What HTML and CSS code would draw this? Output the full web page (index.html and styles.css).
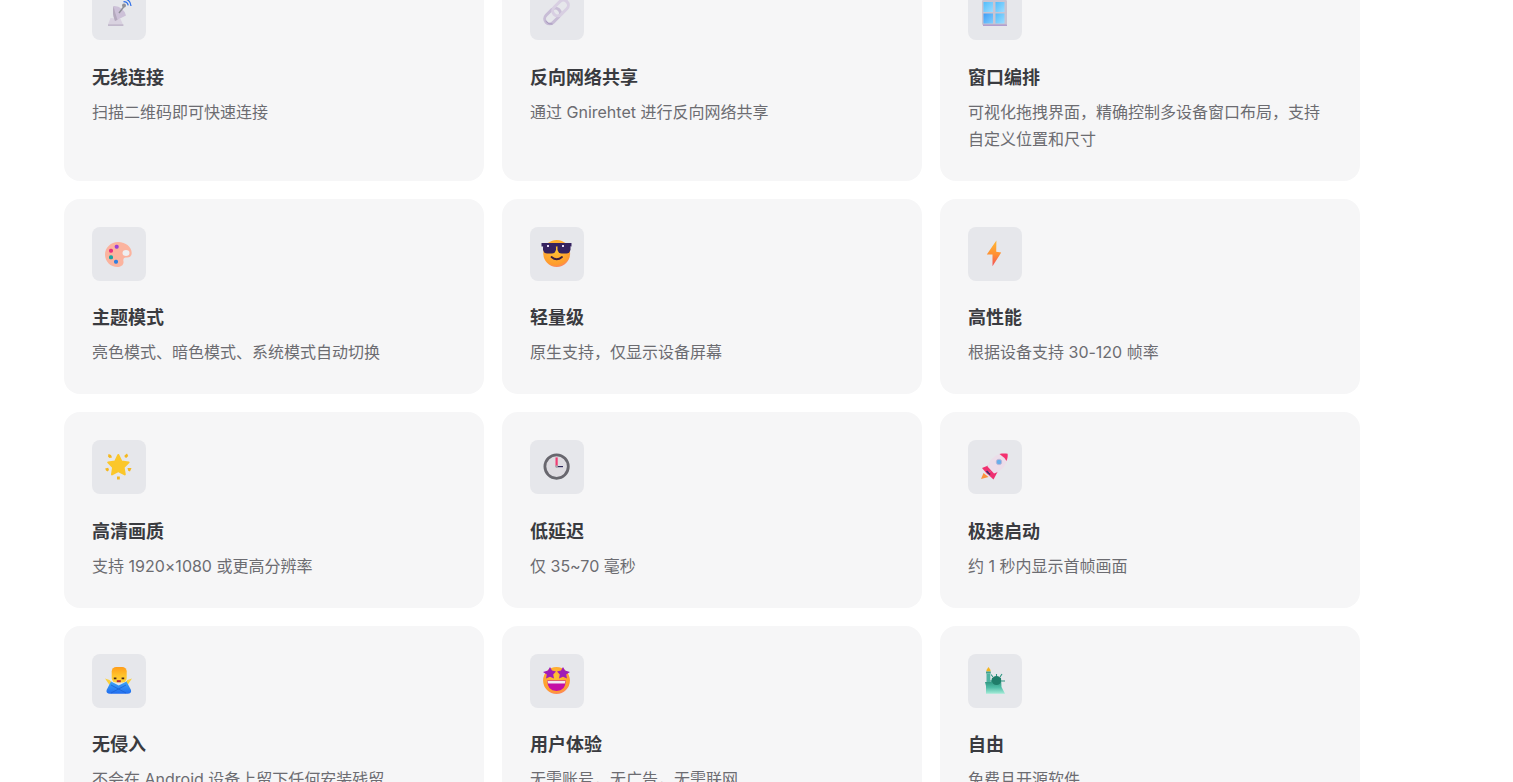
FILE: index.html
```html
<!DOCTYPE html>
<html lang="zh-CN">
<head>
<meta charset="utf-8">
<title>特性</title>
<link rel="stylesheet" href="styles.css">
</head>
<body>
<main class="features">

<article class="card">
  <div class="icon-box"><svg class="icon" viewBox="0 0 28 28">
    <path d="M5.5 19 L3 25.6 H18 L15.5 20Z" fill="#d9d2e0"/>
    <path d="M3 25.4H18.4V26.8H3Z" fill="#b9aec4"/>
    <path d="M8.5 7 Q13 6.5 17 10 Q20.5 13 21 16.5 L10 22 Q7 15 8.5 7Z" fill="#cdc1d8"/>
    <path d="M8.5 7 Q7 15 10 22 L12.5 20.8 Q10 14 8.5 7Z" fill="#b4a9bd"/>
    <path d="M14 14 L19 7.5" stroke="#8e8e96" stroke-width="1.4"/>
    <circle cx="19" cy="6.5" r="2" fill="#8f8f96"/>
    <path d="M18.5 2.6 Q22.5 2.6 23.2 6.4 M18 -0.4 Q25.4 0 26 7" stroke="#2f6fe8" stroke-width="1.3" fill="none"/>
  </svg></div>
  <h3 class="title">无线连接</h3>
  <p class="desc">扫描二维码即可快速连接</p>
</article>

<article class="card">
  <div class="icon-box"><svg class="icon" viewBox="0 0 28 28">
    <g fill="none" stroke-width="3">
      <rect x="0.5" y="12" width="18" height="10" rx="5" transform="rotate(-45 9.5 17)" stroke="#c8bdd6"/>
      <rect x="8.5" y="4" width="18" height="10" rx="5" transform="rotate(-45 17.5 9)" stroke="#d8cfe2"/>
    </g>
    <path d="M2.6 22 Q5.5 26 9.5 25" fill="none" stroke="#a596bd" stroke-width="1"/>
  </svg></div>
  <h3 class="title">反向网络共享</h3>
  <p class="desc">通过 Gnirehtet 进行反向网络共享</p>
</article>

<article class="card">
  <div class="icon-box"><svg class="icon" viewBox="0 0 28 28">
    <defs>
      <linearGradient id="pane" x1="0" y1="0" x2="1" y2="1"><stop offset="0" stop-color="#52bdfb"/><stop offset="1" stop-color="#9bdcff"/></linearGradient>
      <linearGradient id="pane2" x1="0" y1="0" x2="1" y2="1"><stop offset="0" stop-color="#3f9df5"/><stop offset="1" stop-color="#7fcfff"/></linearGradient>
    </defs>
    <rect x="1" y="1" width="25" height="25" rx="1.2" fill="#c9c4d2"/>
    <path d="M2 25.6H26V26.8H2Z" fill="#a48cc8"/>
    <rect x="2.5" y="3" width="9.5" height="10" fill="url(#pane)"/>
    <rect x="14.5" y="3" width="9" height="10" fill="url(#pane)"/>
    <rect x="2.5" y="14.5" width="9.5" height="10" fill="url(#pane2)"/>
    <rect x="14.5" y="14.5" width="9" height="10" fill="url(#pane)"/>
  </svg></div>
  <h3 class="title">窗口编排</h3>
  <p class="desc">可视化拖拽界面，精确控制多设备窗口布局，支持自定义位置和尺寸</p>
</article>

<article class="card">
  <div class="icon-box"><svg class="icon" viewBox="0 0 28 28">
    <path d="M13 2 C21 2 26.7 7 26.7 13 C26.7 16.5 24 18 21 17.5 C18.5 17.3 18 19.5 18.5 21.5 C19 25 15.5 27 12.5 27 C5.5 27 0 21.5 0 14.5 C0 7.5 6 2 13 2Z" fill="#fbb39e"/>
    <ellipse cx="21" cy="13" rx="3.5" ry="3" fill="#eeeff1"/>
    <rect x="9.7" y="4.7" width="4" height="4" rx="1.6" fill="#9b3fd6"/>
    <rect x="4" y="8.7" width="4" height="4" rx="1.6" fill="#e8307f"/>
    <rect x="4" y="15.3" width="4" height="4" rx="1.6" fill="#18a3a3"/>
    <rect x="9" y="19.7" width="4" height="4" rx="1.6" fill="#2f7fe0"/>
  </svg></div>
  <h3 class="title">主题模式</h3>
  <p class="desc">亮色模式、暗色模式、系统模式自动切换</p>
</article>

<article class="card">
  <div class="icon-box"><svg class="icon" viewBox="0 0 28 28">
    <defs>
      <radialGradient id="face" cx=".45" cy=".35" r=".75"><stop offset="0" stop-color="#ffc533"/><stop offset=".75" stop-color="#ff9c2e"/><stop offset="1" stop-color="#f9718f"/></radialGradient>
    </defs>
    <circle cx="13.7" cy="13.5" r="13.4" fill="url(#face)"/>
    <path d="M-1.5 3 H28.5 V6.5 H-1.5Z" fill="#35225f"/>
    <rect x="0" y="3" width="13" height="10.4" rx="4.2" fill="#35225f"/>
    <rect x="14.5" y="3" width="13" height="10.4" rx="4.2" fill="#35225f"/>
    <path d="M4 5h2v2H4zM19 5h2v2h-2z" fill="#e4d8f4"/>
    <path d="M8.5 17 Q13.7 21.5 19 17" fill="none" stroke="#3c1f3f" stroke-width="1.8" stroke-linecap="round"/>
  </svg></div>
  <h3 class="title">轻量级</h3>
  <p class="desc">原生支持，仅显示设备屏幕</p>
</article>

<article class="card">
  <div class="icon-box"><svg class="icon" viewBox="0 0 28 28">
    <defs>
      <linearGradient id="bolt" x1="0" y1="0" x2="0" y2="1"><stop offset="0" stop-color="#ffb833"/><stop offset=".55" stop-color="#ff8f33"/><stop offset="1" stop-color="#f24f5c"/></linearGradient>
    </defs>
    <path d="M15.4 .6 L5.8 14.4 L11.5 14.6 L11.5 26.2 L20.2 12.6 L15.2 11.8Z" fill="url(#bolt)"/>
  </svg></div>
  <h3 class="title">高性能</h3>
  <p class="desc">根据设备支持 30-120 帧率</p>
</article>

<article class="card">
  <div class="icon-box"><svg class="icon" viewBox="0 0 28 28">
    <path d="M13.3 2 L16.4 8.4 L23.6 9.4 L18.6 14.4 L19.8 21.4 L13.3 18.2 L7 21.4 L8.1 14.4 L3.2 9.4 L10.2 8.4Z" fill="#fbc72a" stroke="#fbc72a" stroke-width="2" stroke-linejoin="round"/>
    <g fill="#f5b81f">
      <path d="M3.5 1 l2.5 1 1 2.5 -2.5 .5 -1.5-1.5z"/>
      <path d="M19.5 2.5 l2.5-2 1.2 2.5 -2 2 -1.5-1z"/>
      <path d="M.2 15.5 l3-.8 .8 2.3 -1.5 1.5 -1.5-1z"/>
      <path d="M22.5 15 h4 l-1.5 3.5 -1.8-.7z"/>
      <path d="M12 23.5 h2.8 v3 h-2.8z"/>
    </g>
  </svg></div>
  <h3 class="title">高清画质</h3>
  <p class="desc">支持 1920×1080 或更高分辨率</p>
</article>

<article class="card">
  <div class="icon-box"><svg class="icon" viewBox="0 0 28 28">
    <circle cx="13.6" cy="13.6" r="11.7" fill="#dedce1" stroke="#68676e" stroke-width="2.8"/>
    <path d="M13.6 13.6 V4.4" stroke="#f13b73" stroke-width="2.2"/>
    <path d="M13.6 13.6 H20" stroke="#2f2a5c" stroke-width="1.2"/>
    <circle cx="13.6" cy="13.6" r="1.3" fill="#a6a5ab"/>
  </svg></div>
  <h3 class="title">低延迟</h3>
  <p class="desc">仅 35~70 毫秒</p>
</article>

<article class="card">
  <div class="icon-box"><svg class="icon" viewBox="0 0 28 28">
    <path d="M0 26 L2.5 20 L7.5 24Z" fill="#fb923c"/>
    <path d="M1 15 L8.5 12 L12 16 L6.5 21.5Z" fill="#f0316f"/>
    <path d="M12.5 26.5 L17 18 L12 15 L7 21.5Z" fill="#ee2f70"/>
    <path d="M26.6 .8 C19 -.5 9 4 6.5 13.5 L13 20.5 C22 18 27.5 9 26.6 .8Z" fill="#ecdde9"/>
    <path d="M18.5 1 C21 .4 24.5 .4 26.6 .8 C26.9 3 26.6 5.5 25.5 8 L23.5 5 Z" fill="#f4316f"/>
    <circle cx="18" cy="9" r="2.8" fill="#6aaeea" stroke="#c8b7d6" stroke-width=".8"/>
    <path d="M5.5 18 L9 21.5" stroke="#3b2f6a" stroke-width="1.6"/>
  </svg></div>
  <h3 class="title">极速启动</h3>
  <p class="desc">约 1 秒内显示首帧画面</p>
</article>

<article class="card">
  <div class="icon-box"><svg class="icon" viewBox="0 0 28 28">
    <defs>
      <linearGradient id="arm" x1="0" y1="0" x2="0" y2="1"><stop offset="0" stop-color="#3ea5f5"/><stop offset="1" stop-color="#1f6cf0"/></linearGradient>
      <linearGradient id="hair" x1="0" y1="0" x2="0" y2="1"><stop offset="0" stop-color="#ff9d1a"/><stop offset=".6" stop-color="#ffc62e"/><stop offset="1" stop-color="#ffd23a"/></linearGradient>
    </defs>
    <path d="M0 11.5 L4.5 13 L8 16.5 L4.5 18Z M27 11.5 L22.5 13 L19 16.5 L22.5 18Z" fill="#fcd03a"/>
    <rect x="6.7" y="0" width="15" height="15.5" rx="4.5" fill="url(#hair)"/>
    <path d="M8.8 10.5h2.6v1.8h-2.6zM16.6 10.5h2.6v1.8h-2.6z" fill="#4a2a1a"/>
    <path d="M11.8 13.2h4v2h-4z" fill="#b52a3a"/>
    <path d="M6 14.5 L13.7 18.5 L21.5 14.5 L26 23 Q26.8 26.8 22.5 26.8 H5 Q.8 26.8 1.6 23Z" fill="url(#arm)"/>
    <path d="M6 18 L21 26M21 18 L6 26" stroke="#1d5fd2" stroke-width=".8"/>
  </svg></div>
  <h3 class="title">无侵入</h3>
  <p class="desc">不会在 Android 设备上留下任何安装残留</p>
</article>

<article class="card">
  <div class="icon-box"><svg class="icon" viewBox="0 0 28 28">
    <circle cx="13.5" cy="13.5" r="13.4" fill="url(#face)"/>
    <path d="M7 0 L9 3.5 L13 4.5 L10.2 7.5 L11 11.5 L7 9.8 L3 11.5 L3.8 7.5 L0 5 L5 3.5Z" fill="#a01cb8"/>
    <path d="M20 0 L22 3.5 L27 5 L23.2 7.5 L24 11.5 L20 9.8 L16 11.5 L16.8 7.5 L14 4.5 L18 3.5Z" fill="#a01cb8"/>
    <path d="M4.3 13.5 H22.7 Q22.7 24 13.5 24 Q4.3 24 4.3 13.5Z" fill="#c40ea5"/>
    <path d="M4.6 14 H22.4 L21.8 16.5 H5.2Z" fill="#f1e8f2"/>
  </svg></div>
  <h3 class="title">用户体验</h3>
  <p class="desc">无需账号，无广告，无需联网</p>
</article>

<article class="card">
  <div class="icon-box"><svg class="icon" viewBox="0 0 28 28">
    <defs>
      <linearGradient id="statue" x1="0" y1="0" x2="0" y2="1"><stop offset="0" stop-color="#1c7d68"/><stop offset=".6" stop-color="#4fbda6"/><stop offset="1" stop-color="#a5ecd8"/></linearGradient>
    </defs>
    <path d="M7.5 0 L9.5 3 L9.5 4.5 L5.5 4.5 L5.5 3Z" fill="#f3b41f"/>
    <path d="M5 4.5h4.8v2h-4.8z" fill="#3fa08d"/>
    <path d="M5.5 6.5h3.8v10h-3.8z" fill="#4fb3a0"/>
    <path d="M4 15 H10 L11 11 H20 L20.5 20 L24 26.8 H5 L5 19Z" fill="url(#statue)"/>
    <circle cx="15.5" cy="13.5" r="4.6" fill="#1f7d69"/>
    <path d="M15.5 9 V7 M12 10 L10 7.5 M19 10 L21 7 M20 14 H24 M11 14 H9" stroke="#2d9680" stroke-width="1.1"/>
  </svg></div>
  <h3 class="title">自由</h3>
  <p class="desc">免费且开源软件</p>
</article>

</main>
</body>
</html>
```

FILE: styles.css
```css
html, body {
  margin: 0;
  height: 100%;
  overflow: hidden;
  background: #fff;
}

body {
  font-family: Inter, "Noto Sans CJK SC", sans-serif;
  text-rendering: optimizeSpeed;
}

.features {
  display: grid;
  grid-template-columns: repeat(3, 420px);
  gap: 18px;
  margin-top: -41.6px;
  padding-left: 64px;
}

.card {
  box-sizing: border-box;
  padding: 28px;
  background: #f6f6f7;
  border-radius: 16px;
}

.icon-box {
  display: flex;
  align-items: center;
  justify-content: center;
  width: 54px;
  height: 54px;
  margin-bottom: 24.3px;
  background: #e6e7eb;
  border-radius: 8px;
}

.icon {
  width: 28px;
  height: 28px;
  overflow: visible;
}

.title {
  margin: 0 0 8.7px;
  font-size: 18px;
  font-weight: 600;
  line-height: 25.2px;
  color: #3a3b40;
}

.desc {
  margin: 0;
  font-size: 16px;
  font-weight: 400;
  line-height: 27.2px;
  color: #6c6c71;
}
```
